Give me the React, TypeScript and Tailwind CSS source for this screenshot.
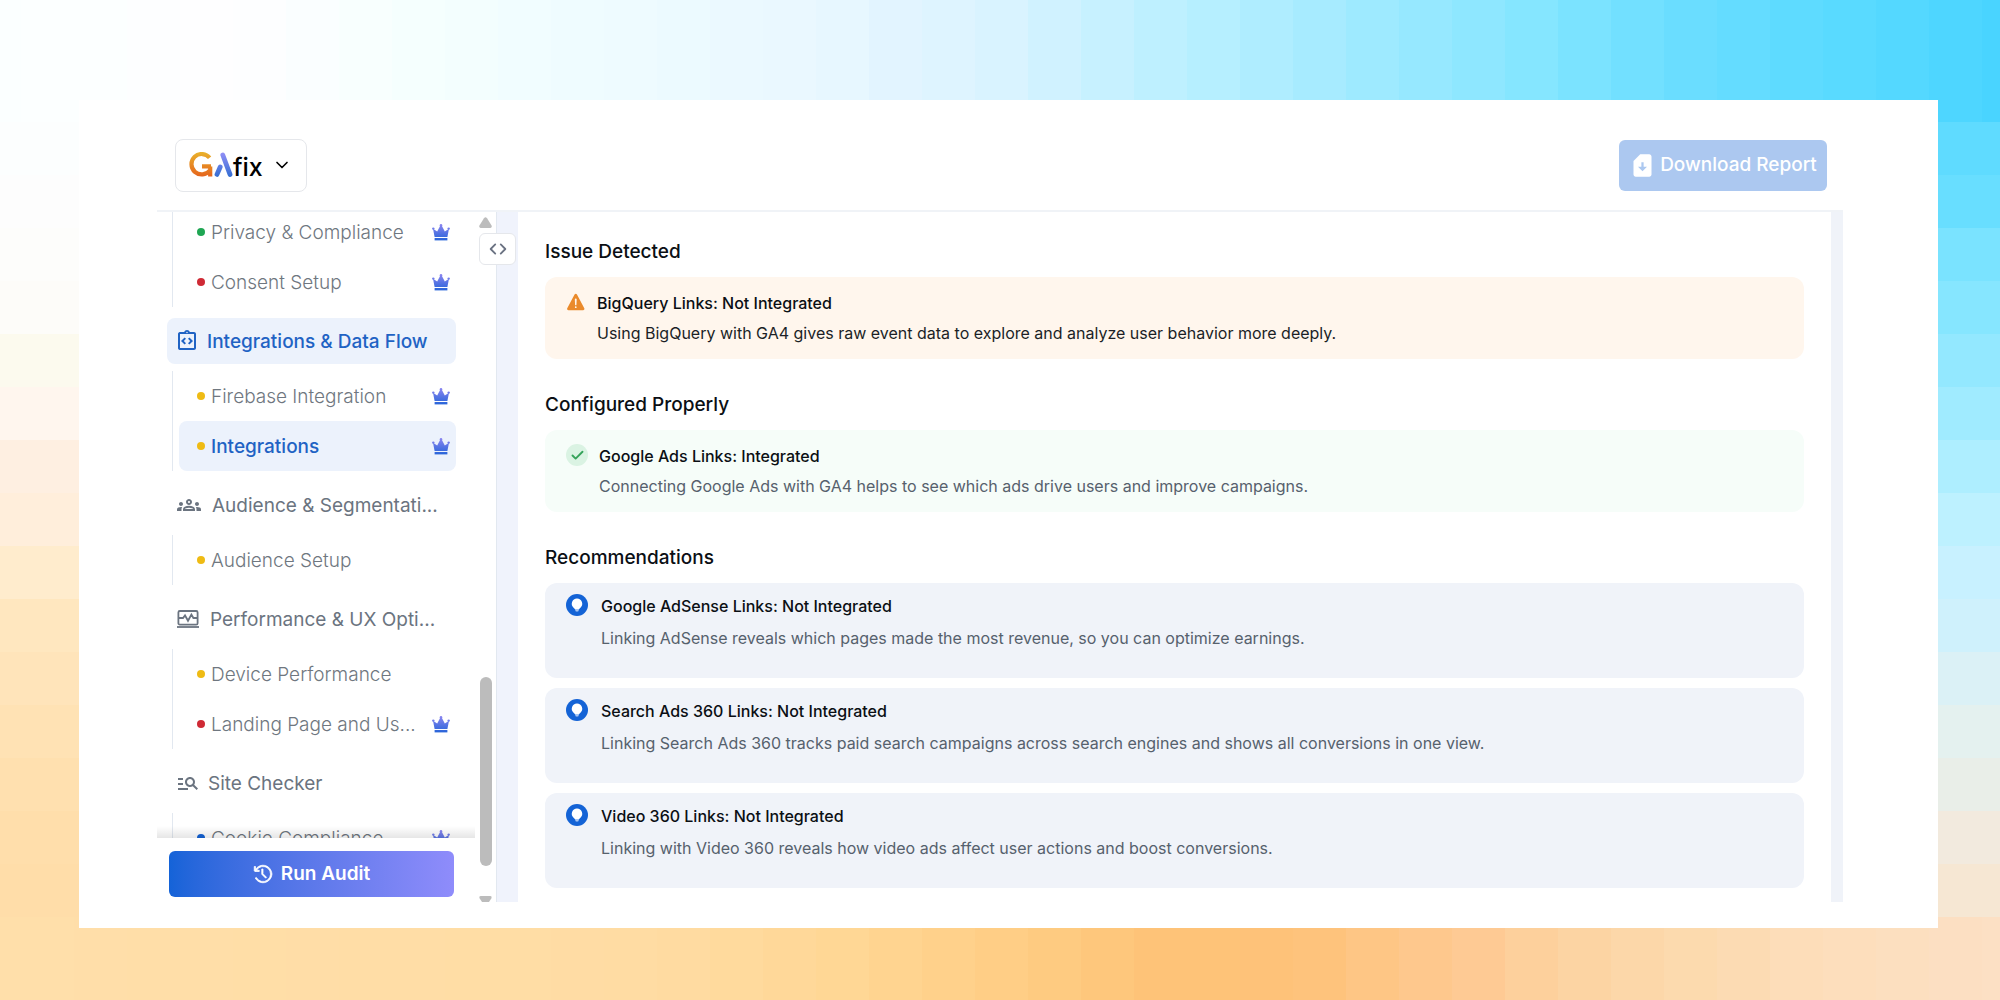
import { Check, ChevronDown, ChevronsLeftRight } from 'lucide-react';
import type { ReactNode } from 'react';
import { IoWarning } from 'react-icons/io5';
import {
  MdManageSearch,
  MdOutlineGroups,
  MdOutlineIntegrationInstructions,
  MdSimCardDownload
} from 'react-icons/md';
import { VscHistory } from 'react-icons/vsc';

type Stop = [number, number, number, number];

const topStops: Stop[] = [
  [0, 251, 255, 255],
  [240, 254, 254, 255],
  [420, 245, 255, 254],
  [620, 238, 251, 255],
  [820, 233, 248, 255],
  [900, 226, 244, 255],
  [1000, 217, 243, 255],
  [1100, 200, 241, 255],
  [1200, 184, 239, 255],
  [1300, 170, 236, 255],
  [1400, 154, 233, 255],
  [1540, 132, 230, 255],
  [1600, 120, 226, 255],
  [1700, 104, 221, 255],
  [1800, 94, 219, 255],
  [1900, 84, 216, 255],
  [2000, 73, 212, 255]
];

const bottomStops: Stop[] = [
  [0, 255, 223, 170],
  [400, 255, 221, 166],
  [660, 255, 220, 163],
  [860, 255, 214, 148],
  [980, 255, 207, 136],
  [1100, 254, 200, 124],
  [1160, 254, 195, 120],
  [1300, 254, 194, 121],
  [1400, 254, 199, 138],
  [1480, 254, 202, 148],
  [1560, 252, 211, 161],
  [1700, 252, 218, 175],
  [1800, 253, 221, 185],
  [2000, 252, 224, 196]
];

const leftStops: Stop[] = [
  [0, 251, 255, 255],
  [130, 251, 254, 255],
  [200, 253, 253, 253],
  [330, 253, 252, 248],
  [365, 252, 250, 236],
  [420, 255, 245, 238],
  [470, 254, 239, 224],
  [520, 255, 238, 219],
  [570, 255, 236, 206],
  [620, 255, 231, 192],
  [730, 255, 226, 180],
  [800, 255, 224, 173],
  [870, 255, 221, 169],
  [1000, 255, 223, 170]
];

const rightStops: Stop[] = [
  [0, 76, 213, 255],
  [100, 87, 217, 255],
  [200, 104, 222, 255],
  [255, 122, 227, 255],
  [308, 134, 230, 255],
  [415, 160, 235, 255],
  [520, 189, 241, 255],
  [570, 200, 241, 255],
  [630, 208, 241, 252],
  [680, 219, 241, 246],
  [730, 228, 241, 239],
  [790, 234, 238, 231],
  [840, 242, 234, 221],
  [895, 246, 231, 210],
  [950, 252, 228, 200],
  [1000, 255, 220, 182]
];

function colorAt(stops: Stop[], at: number) {
  const end = stops.findIndex((stop) => stop[0] >= at);
  const b = end === -1 ? stops[stops.length - 1] : stops[end];
  const a = end <= 0 ? b : stops[end - 1];
  const t = a === b ? 0 : (at - a[0]) / (b[0] - a[0]);
  const mix = [1, 2, 3].map((i) => Math.round(a[i] + (b[i] - a[i]) * t));
  return `rgb(${mix.join(',')})`;
}

function tileColor(x: number, y: number) {
  if (y < 100) return colorAt(topStops, x);
  if (y > 900) return colorAt(bottomStops, x);
  return colorAt(x < 1000 ? leftStops : rightStops, y);
}

function MosaicBackground() {
  const tile = 53;
  const tiles: ReactNode[] = [];
  for (let y = -37; y < 1000; y += tile) {
    for (let x = -32; x < 2000; x += tile) {
      tiles.push(
        <rect
          key={`${x}:${y}`}
          x={x}
          y={y}
          width={tile}
          height={tile}
          fill={tileColor(x + tile / 2, y + tile / 2)}
        />
      );
    }
  }
  return (
    <svg
      className="absolute inset-0 -z-10 h-full w-full"
      viewBox="0 0 2000 1000"
      preserveAspectRatio="none"
      shapeRendering="crispEdges"
      aria-hidden="true"
    >
      {tiles}
    </svg>
  );
}

function Logo() {
  return (
    <span className="flex items-center">
      <svg width="44" height="26" viewBox="0 0 44 26" aria-hidden="true">
        <defs>
          <linearGradient id="logo-g" x1="0" y1="0" x2="0" y2="26" gradientUnits="userSpaceOnUse">
            <stop offset="0" stopColor="#e9b22c" />
            <stop offset="1" stopColor="#e5601c" />
          </linearGradient>
          <linearGradient id="logo-a" x1="0" y1="0" x2="0" y2="26" gradientUnits="userSpaceOnUse">
            <stop offset="0" stopColor="#9490f7" />
            <stop offset="1" stopColor="#2f6cd0" />
          </linearGradient>
        </defs>
        <path
          d="M20.6 5.8A10.2 10.2 0 1 0 20.8 18.4M13 14.4H22M21.2 14.4V24.6"
          fill="none"
          stroke="url(#logo-g)"
          strokeWidth="4.2"
        />
        <path
          d="M33.8 3 41 22.4M31.2 15 28 22.4"
          fill="none"
          stroke="url(#logo-a)"
          strokeWidth="4.8"
          strokeLinecap="round"
        />
      </svg>
      <span className="pt-1 text-[25px] leading-7 font-medium text-black">fix</span>
    </span>
  );
}

function Crown() {
  return (
    <svg width="18" height="17" viewBox="0 0 18 17" className="shrink-0" aria-hidden="true">
      <defs>
        <linearGradient id="crown" x1="0" y1="0" x2="0" y2="17" gradientUnits="userSpaceOnUse">
          <stop offset="0" stopColor="#8c86f0" />
          <stop offset="1" stopColor="#2463d8" />
        </linearGradient>
      </defs>
      <g fill="url(#crown)">
        <circle cx="9" cy="1.4" r="1.3" />
        <circle cx="1.3" cy="4.6" r="1.2" />
        <circle cx="16.7" cy="4.6" r="1.2" />
        <path d="M1 4.8 5.2 7.4 8.2 1.8H9.8L12.8 7.4 17 4.8 15.4 13H2.6Z" />
        <path d="M2.6 14H15.4V16.4H2.6Z" />
      </g>
    </svg>
  );
}

function PerformanceIcon() {
  return (
    <svg
      className="mr-[3px] ml-0.5"
      width="22"
      height="18"
      viewBox="0 0 22 18"
      fill="none"
      stroke="currentColor"
      strokeWidth="1.8"
      aria-hidden="true"
    >
      <rect x="1.4" y="1" width="19.2" height="13.6" rx="1.4" />
      <path d="M2 8H6L8 5.4 11 10.8 14.4 4.6 16.4 8H20.2" />
      <path d="M0 17H22" />
    </svg>
  );
}

function BulbIcon() {
  return (
    <svg width="22" height="22" viewBox="0 0 22 22" className="shrink-0" aria-hidden="true">
      <circle cx="11" cy="11" r="11" fill="#1463d6" />
      <path
        d="M11 4.6A5.2 5.2 0 0 0 7.8 13.9C8.5 14.4 8.6 14.7 8.6 15H13.4C13.4 14.7 13.5 14.4 14.2 13.9A5.2 5.2 0 0 0 11 4.6Z"
        fill="#fff"
      />
      <path d="M8.8 15H13.2L12.2 17.6H9.8Z" fill="#a9c7f3" />
    </svg>
  );
}

type Item = { label: string; dot: string; premium?: boolean; active?: boolean };

function SubList({ items, className = '' }: { items: Item[]; className?: string }) {
  return (
    <ul className={`ml-[15px] shrink-0 border-l border-slate-200 pl-[6px] ${className}`}>
      {items.map(({ label, dot, premium, active }) => (
        <li key={label}>
          <a
            href="#"
            className={`flex h-[50px] items-center rounded-lg pr-[6px] pl-[18px] text-[19px] ${
              active ? 'bg-[#ecf2fc] font-medium text-[#1f63c4]' : 'font-light text-[#6f7780]'
            }`}
          >
            <span className={`mr-[6px] size-2 shrink-0 rounded-full ${dot}`} />
            <span className="grow pt-0.5 whitespace-nowrap">{label}</span>
            {premium && <Crown />}
          </a>
        </li>
      ))}
    </ul>
  );
}

function GroupLink({
  icon,
  label,
  active
}: {
  icon: ReactNode;
  label: string;
  active?: boolean;
}) {
  return (
    <a
      href="#"
      className={`mt-[11px] mb-[7px] ml-[10px] flex h-[46px] shrink-0 items-center gap-2 rounded-lg pl-2 text-[19px] whitespace-nowrap ${
        active ? 'bg-[#ecf2fc] font-medium text-[#1f63c4]' : 'text-[#6b7480]'
      }`}
    >
      {icon}
      <span className="pt-0.5">{label}</span>
    </a>
  );
}

function Sidebar() {
  return (
    <aside className="flex w-[322px] shrink-0 flex-col">
      <nav className="flex h-0 grow flex-col overflow-hidden pr-[23px]">
        <SubList
          className="-mt-[5px]"
          items={[
            { label: 'Privacy & Compliance', dot: 'bg-[#1fa653]', premium: true },
            { label: 'Consent Setup', dot: 'bg-[#cf2a35]', premium: true }
          ]}
        />
        <GroupLink
          active
          icon={<MdOutlineIntegrationInstructions size={24} />}
          label="Integrations & Data Flow"
        />
        <SubList
          items={[
            { label: 'Firebase Integration', dot: 'bg-[#efbb14]', premium: true },
            { label: 'Integrations', dot: 'bg-[#efbb14]', premium: true, active: true }
          ]}
        />
        <GroupLink
          icon={<MdOutlineGroups size={24} className="mr-[3px] ml-0.5" />}
          label="Audience & Segmentati..."
        />
        <SubList items={[{ label: 'Audience Setup', dot: 'bg-[#efbb14]' }]} />
        <GroupLink icon={<PerformanceIcon />} label="Performance & UX Opti..." />
        <SubList
          items={[
            { label: 'Device Performance', dot: 'bg-[#efbb14]' },
            { label: 'Landing Page and Us...', dot: 'bg-[#cf2a35]', premium: true }
          ]}
        />
        <GroupLink icon={<MdManageSearch size={24} className="ml-px" />} label="Site Checker" />
        <SubList
          items={[{ label: 'Cookie Compliance', dot: 'bg-[#1463d6]', premium: true }]}
        />
      </nav>
      <div className="relative pt-[13px] pr-[25px] pb-[5px] pl-3">
        <div className="absolute right-1 bottom-full left-0 h-3 bg-linear-to-t from-black/10 to-transparent" />
        <button
          type="button"
          className="flex h-[46px] w-full items-center justify-center gap-2 rounded-md bg-linear-to-r from-[#1463d8] to-[#8f8cfb] text-[19px] font-semibold text-white"
        >
          <VscHistory size={20} stroke="currentColor" strokeWidth={0.6} />
          Run Audit
        </button>
      </div>
    </aside>
  );
}

function ScrollTrack() {
  return (
    <div
      className="flex w-[18px] shrink-0 flex-col border-r border-slate-200 pr-1"
      aria-hidden="true"
    >
      <svg className="mt-[5px] shrink-0" width="13" height="11" viewBox="0 0 13 11" fill="#bcbcbc">
        <path d="M5 1.2Q6.5-.6 8 1.2L12.6 8.4Q13 11 11.4 11H1.6Q0 11 .4 8.4Z" />
      </svg>
      <div className="grow-[45]" />
      <div className="ml-px w-3 grow-[19] rounded-full bg-[#bcbcbc]" />
      <div className="grow-[3]" />
      <svg className="shrink-0" width="13" height="6" viewBox="0 0 13 6" fill="#bcbcbc">
        <path d="M1.6 0H11.4Q13 0 12.6 2L10 6H3L.4 2Q0 0 1.6 0Z" />
      </svg>
    </div>
  );
}

function Heading({ children }: { children: ReactNode }) {
  return <h2 className="mb-[13px] text-[19px] leading-6 font-medium text-[#0b0f14]">{children}</h2>;
}

const recommendations = [
  {
    title: 'Google AdSense Links: Not Integrated',
    text: 'Linking AdSense reveals which pages made the most revenue, so you can optimize earnings.'
  },
  {
    title: 'Search Ads 360 Links: Not Integrated',
    text: 'Linking Search Ads 360 tracks paid search campaigns across search engines and shows all conversions in one view.'
  },
  {
    title: 'Video 360 Links: Not Integrated',
    text: 'Linking with Video 360 reveals how video ads affect user actions and boost conversions.'
  }
];

function Report() {
  return (
    <main className="flex min-w-0 grow flex-col gap-[34px] bg-white px-[27px] pt-7 pb-[14px]">
      <section>
        <Heading>Issue Detected</Heading>
        <div className="flex h-[82px] gap-[10px] rounded-xl bg-[#fff6ed] pt-[14px] pl-5">
          <IoWarning size={22} className="shrink-0 text-[#ea8a2b]" />
          <div className="text-[16px]">
            <h3 className="leading-6 font-medium text-[#0b0f14]">BigQuery Links: Not Integrated</h3>
            <p className="mt-[6px] leading-6 text-[#1b1f26]">
              Using BigQuery with GA4 gives raw event data to explore and analyze user behavior more
              deeply.
            </p>
          </div>
        </div>
      </section>
      <section>
        <Heading>Configured Properly</Heading>
        <div className="flex h-[82px] gap-[11px] rounded-xl bg-[#f6fdf9] pt-[14px] pl-[21px]">
          <span className="flex size-[22px] shrink-0 items-center justify-center rounded-full bg-[#daf3e3]">
            <Check size={15} strokeWidth={3} className="text-[#35a35a]" />
          </span>
          <div className="text-[16px]">
            <h3 className="leading-6 font-medium text-[#0b0f14]">Google Ads Links: Integrated</h3>
            <p className="mt-[6px] leading-6 text-[#56616d]">
              Connecting Google Ads with GA4 helps to see which ads drive users and improve
              campaigns.
            </p>
          </div>
        </div>
      </section>
      <section>
        <Heading>Recommendations</Heading>
        <ul className="flex flex-col gap-[10px]">
          {recommendations.map(({ title, text }) => (
            <li
              key={title}
              className="flex h-[95px] gap-[13px] rounded-xl bg-[#f0f3f9] pt-[11px] pl-[21px]"
            >
              <BulbIcon />
              <div className="text-[16px]">
                <h3 className="leading-6 font-medium text-[#0b0f14]">{title}</h3>
                <p className="mt-2 leading-6 text-[#56616d]">{text}</p>
              </div>
            </li>
          ))}
        </ul>
      </section>
    </main>
  );
}

export default function App() {
  return (
    <div className="relative isolate min-h-screen pt-[100px] pr-[62px] pb-[72px] pl-[79px] font-['Inter',sans-serif]">
      <MosaicBackground />
      <div className="bg-white pr-[95px] pb-[26px] pl-[78px]">
        <header className="flex h-[112px] items-center justify-between border-b-2 border-[#f0f3f7] pt-5 pr-4 pl-[18px]">
          <button
            type="button"
            className="flex h-[53px] w-[132px] items-center justify-between rounded-lg border border-gray-200 pr-[14px] pl-[13px]"
          >
            <Logo />
            <ChevronDown size={20} className="text-black" />
          </button>
          <button
            type="button"
            className="flex h-[51px] w-[208px] items-center justify-center gap-1 rounded-md bg-[#acc8f0] text-[19px] font-medium whitespace-nowrap text-white"
          >
            <MdSimCardDownload size={27} className="shrink-0" />
            Download Report
          </button>
        </header>
        <div className="flex">
          <Sidebar />
          <ScrollTrack />
          <div className="relative w-[21px] shrink-0 bg-[#f0f3fc]">
            <button
              type="button"
              aria-label="Toggle sidebar"
              className="absolute top-[21px] right-[2px] flex h-8 w-[37px] items-center justify-center rounded-md border border-gray-200 bg-white text-gray-500"
            >
              <ChevronsLeftRight size={22} strokeWidth={2} className="shrink-0" />
            </button>
          </div>
          <Report />
          <div className="w-3 shrink-0 bg-[#f0f3f9]" />
        </div>
      </div>
    </div>
  );
}
